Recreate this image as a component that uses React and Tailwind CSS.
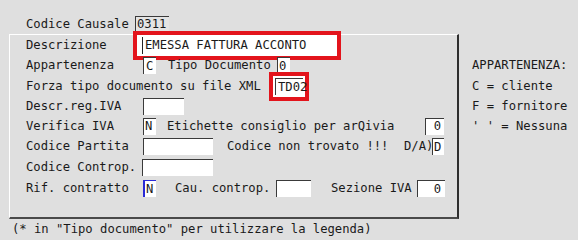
import React from "react";

const Field = ({ className = "", children }) => (
  <span
    className={`flex items-center bg-white border-t border-l border-[#3a3a3a] h-[17px] leading-none ${className}`}
  >
    {children}
  </span>
);

export default function App() {
  return (
    <div
      className="w-[578px] h-[240px] bg-[#dfdfdf] text-[#1a1a1a] text-[12.2px] leading-none overflow-hidden flex flex-col"
      style={{ fontFamily: '"DejaVu Sans Mono", "Liberation Mono", monospace' }}
    >
      <div className="h-[14px]" />
      {/* Row 1 */}
      <div className="h-[20px] flex items-center pl-[26px]">
        <span className="w-[109px]">Codice Causale</span>
        <span className="flex items-center h-[17px] w-[34px] border-t border-l border-[#3a3a3a] bg-[#e4e4e4]">
          <span className="pl-[1px]">0311</span>
        </span>
      </div>

      <div className="flex">
        {/* Panel */}
        <div className="ml-[9px] w-[450px] h-[185px] border-t border-l border-white border-r-2 border-b-2 border-r-[#2e2e2e] border-b-[#4a4a4a] pl-[16px] flex flex-col">
          {/* Descrizione */}
          <div className="h-[20px] flex items-center">
            <span className="w-[111px]">Descrizione</span>
            <span className="flex items-center bg-white w-[200px] h-[21px] pl-[5px] shadow-[0_0_0_4px_#e3141c]">
              <span className="flex items-center h-[17px] border-l border-[#222] pl-[2px]">
                EMESSA FATTURA ACCONTO
              </span>
            </span>
          </div>
          {/* Appartenenza */}
          <div className="h-[21px] flex items-center">
            <span className="w-[117px]">Appartenenza</span>
            <Field className="w-[13px] pl-[2px]">C</Field>
            <span className="ml-[12px] w-[109px]">Tipo Documento</span>
            <Field className="w-[13px] pl-[1px] bg-[#e4e4e4]">0</Field>
          </div>
          {/* Forza */}
          <div className="h-[21px] flex items-center">
            <span className="w-[249px]">Forza tipo documento su file XML</span>
            <Field className="w-[28px] pl-[2px] shadow-[0_0_0_2px_#ffffff,0_0_0_6px_#e3141c]">TD02</Field>
          </div>
          {/* Descr.reg.IVA */}
          <div className="h-[19px] flex items-center">
            <span className="w-[117px]">Descr.reg.IVA</span>
            <Field className="w-[41px]" />
          </div>
          {/* Verifica IVA */}
          <div className="h-[20px] flex items-center">
            <span className="w-[117px]">Verifica IVA</span>
            <Field className="w-[13px] pl-[1px]">N</Field>
            <span className="ml-[11px] w-[258px]">Etichette consiglio per arQivia</span>
            <Field className="w-[19px] justify-end pr-[3px]">0</Field>
          </div>
          {/* Codice Partita */}
          <div className="h-[21px] flex items-center">
            <span className="w-[117px]">Codice Partita</span>
            <Field className="w-[70px]" />
            <span className="ml-[14px] w-[177px]">Codice non trovato !!!</span>
            <span className="w-[28px]">D/A)</span>
            <Field className="w-[12px] pl-[1px]">D</Field>
          </div>
          {/* Codice Controp. */}
          <div className="h-[21px] flex items-center">
            <span className="w-[116px]">Codice Controp.</span>
            <Field className="w-[71px]" />
          </div>
          {/* Rif. contratto */}
          <div className="h-[21px] flex items-center">
            <span className="w-[117px]">Rif. contratto</span>
            <span className="flex items-center bg-white h-[17px] w-[13px] border-t border-l-2 border-[#2a2ad6] pl-[1px]">
              N
            </span>
            <span className="ml-[19px] w-[101px]">Cau. controp.</span>
            <Field className="w-[35px]" />
            <span className="ml-[20px] w-[86px]">Sezione IVA</span>
            <Field className="w-[28px] justify-end pr-[4px]">0</Field>
          </div>
        </div>

        {/* Legend */}
        <div className="ml-[13px] flex flex-col pt-[21px]">
          <div className="h-[21px] flex items-center">APPARTENENZA:</div>
          <div className="h-[21px] flex items-center">C = cliente</div>
          <div className="h-[19px] flex items-center">F = fornitore</div>
          <div className="h-[21px] flex items-center">' ' = Nessuna</div>
        </div>
      </div>

      {/* Footer */}
      <div className="h-[21px] flex items-center pl-[12px]">
        (* in "Tipo documento" per utilizzare la legenda)
      </div>
    </div>
  );
}
